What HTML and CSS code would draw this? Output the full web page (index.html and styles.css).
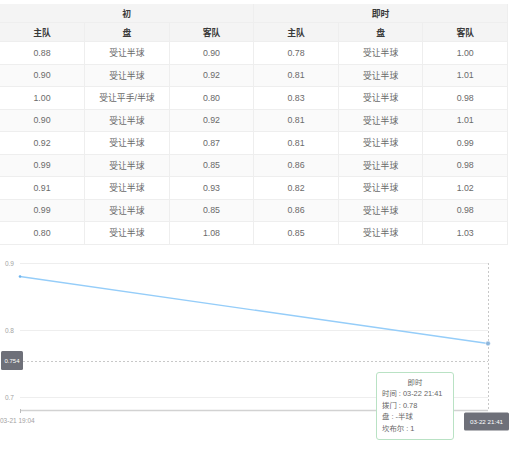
FILE: index.html
```html
<!DOCTYPE html>
<html lang="zh">
<head>
<meta charset="utf-8">
<link rel="stylesheet" href="styles.css">
</head>
<body>
<div class="page">
  <table class="odds">
    <thead>
      <tr class="group">
        <th colspan="3">初</th>
        <th colspan="3">即时</th>
      </tr>
      <tr class="cols">
        <th>主队</th><th>盘</th><th>客队</th>
        <th>主队</th><th>盘</th><th>客队</th>
      </tr>
    </thead>
    <tbody>
      <tr><td>0.88</td><td>受让半球</td><td>0.90</td><td>0.78</td><td>受让半球</td><td>1.00</td></tr>
      <tr><td>0.90</td><td>受让半球</td><td>0.92</td><td>0.81</td><td>受让半球</td><td>1.01</td></tr>
      <tr><td>1.00</td><td>受让平手/半球</td><td>0.80</td><td>0.83</td><td>受让半球</td><td>0.98</td></tr>
      <tr><td>0.90</td><td>受让半球</td><td>0.92</td><td>0.81</td><td>受让半球</td><td>1.01</td></tr>
      <tr><td>0.92</td><td>受让半球</td><td>0.87</td><td>0.81</td><td>受让半球</td><td>0.99</td></tr>
      <tr><td>0.99</td><td>受让半球</td><td>0.85</td><td>0.86</td><td>受让半球</td><td>0.98</td></tr>
      <tr><td>0.91</td><td>受让半球</td><td>0.93</td><td>0.82</td><td>受让半球</td><td>1.02</td></tr>
      <tr><td>0.99</td><td>受让半球</td><td>0.85</td><td>0.86</td><td>受让半球</td><td>0.98</td></tr>
      <tr><td>0.80</td><td>受让半球</td><td>1.08</td><td>0.85</td><td>受让半球</td><td>1.03</td></tr>
    </tbody>
  </table>

  <div class="chart">
    <svg class="plot" width="525" height="206" viewBox="0 0 525 206">
      <g stroke="#eeeeee" stroke-width="1">
        <line x1="20" y1="18.5" x2="488" y2="18.5"/>
        <line x1="20" y1="85.5" x2="488" y2="85.5"/>
        <line x1="20" y1="152.5" x2="488" y2="152.5"/>
      </g>
      <g fill="#a3a3a3" font-size="6.5" text-anchor="end">
        <text x="14" y="20.5">0.9</text>
        <text x="14" y="87.5">0.8</text>
        <text x="14" y="154.5">0.7</text>
      </g>
      <line x1="488.5" y1="18" x2="488.5" y2="165" stroke="#c8c8c8" stroke-width="1" stroke-dasharray="2 2"/>
      <line x1="23" y1="116.5" x2="488" y2="116.5" stroke="#c8c8c8" stroke-width="1" stroke-dasharray="2 2"/>
      <line x1="20" y1="165.5" x2="488" y2="165.5" stroke="#d2d2d2" stroke-width="1.5"/>
      <line x1="20.5" y1="164" x2="20.5" y2="168" stroke="#bdbdbd" stroke-width="1"/>
      <text x="0" y="177.5" fill="#a3a3a3" font-size="6.5">03-21 19:04</text>
      <polyline points="20,31.5 488,98.5" fill="none" stroke="#95cdf9" stroke-width="1.3"/>
      <circle cx="20" cy="31.5" r="1.3" fill="#6fb4ee"/>
      <circle cx="488" cy="98.5" r="2.4" fill="#8db6dc" stroke="#ffffff" stroke-width="0.6"/>
      <rect x="1" y="106" width="22" height="19" rx="1.5" fill="#6e7079"/>
      <text x="12" y="118" fill="#ffffff" font-size="6" text-anchor="middle">0.754</text>
      <rect x="464" y="167.5" width="45" height="18" rx="1.5" fill="#6e7079"/>
      <text x="486.5" y="179" fill="#ffffff" font-size="6.2" text-anchor="middle">03-22 21:41</text>
    </svg>
    <div class="tip">
      <div class="tip-title">即时</div>
      <div>时间 : 03-22 21:41</div>
      <div>拨门 : 0.78</div>
      <div>盘 : -半球</div>
      <div>坎布尔 : 1</div>
    </div>
  </div>
</div>
</body>
</html>
```
FILE: styles.css
```css
html, body {
  margin: 0;
  padding: 0;
  background: #ffffff;
}
body {
  font-family: "Liberation Sans", "Noto Sans CJK SC", sans-serif;
  width: 525px;
  height: 451px;
  overflow: hidden;
}
.page {
  padding-top: 4px;
}
.odds {
  width: 508px;
  border-collapse: collapse;
  table-layout: fixed;
  font-size: 8.8px;
}
.odds th, .odds td {
  border: 1px solid #eeeeee;
  text-align: center;
  padding: 0;
}
.odds tr:first-child th { border-top: 0; }
.odds th:first-child, .odds td:first-child { border-left: 0; }
.odds thead th {
  background: #f4f4f4;
  color: #3a3a3a;
  font-weight: bold;
  height: 18px;
}
.odds tbody td {
  color: #6a6a6a;
  height: 21.5px;
}
.odds tbody tr:nth-child(even) td {
  background: #fafafa;
}
.chart {
  position: relative;
  height: 206px;
}
.plot {
  display: block;
  font-family: "Liberation Sans", "Noto Sans CJK SC", sans-serif;
}
.tip {
  position: absolute;
  left: 376px;
  top: 127px;
  width: 66px;
  height: 58px;
  padding: 4px 5px;
  background: #ffffff;
  border: 1px solid #b9e2c4;
  border-radius: 3px;
  font-size: 7.4px;
  line-height: 11.6px;
  color: #666666;
  white-space: nowrap;
}
.tip-title {
  text-align: center;
}
```
